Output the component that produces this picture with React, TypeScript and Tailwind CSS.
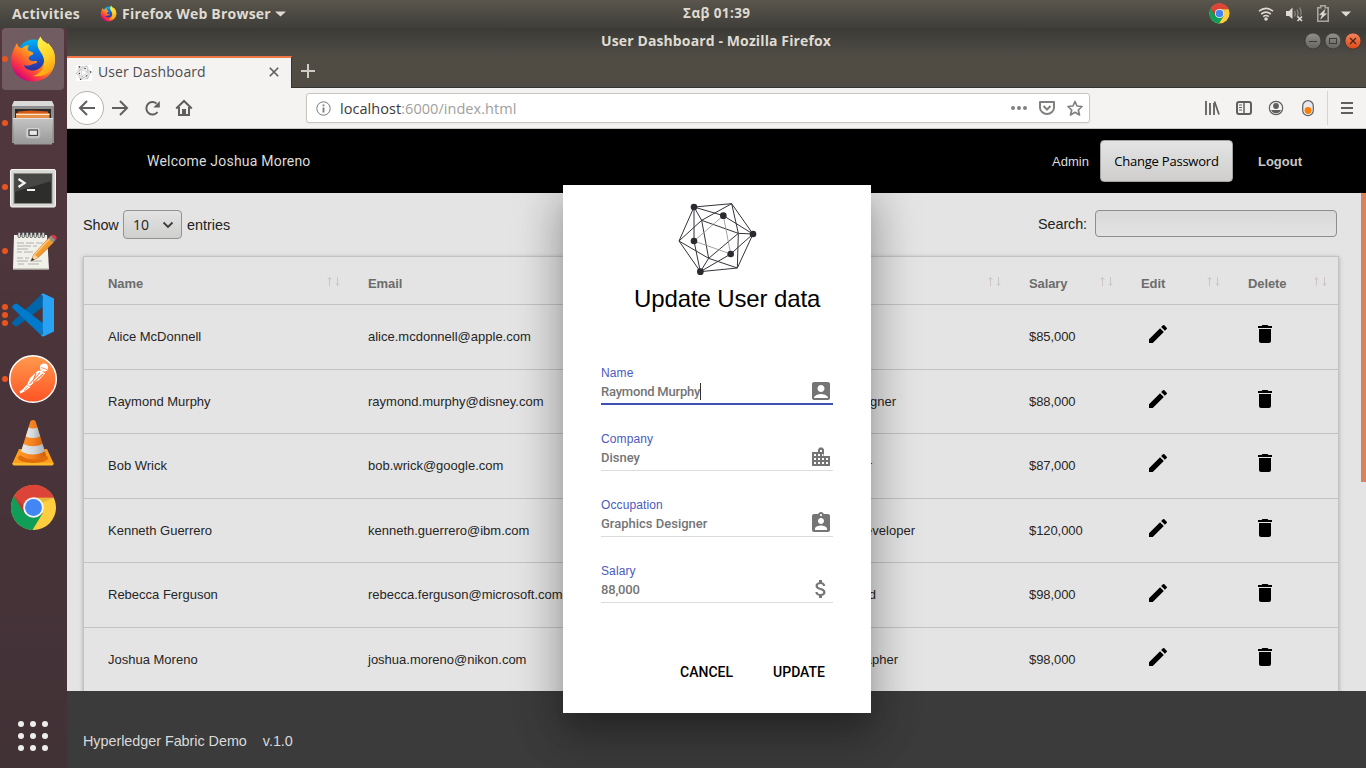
import React from "react";
import {
  MdEdit,
  MdDelete,
  MdAccountBox,
  MdAssignmentInd,
  MdAttachMoney,
} from "react-icons/md";

const UI = "font-['Open_Sans','Noto_Sans',sans-serif]";
const SANS = "font-['Liberation_Sans',Arial,sans-serif]";
const ROBOTO = "font-['Roboto',sans-serif]";

function ChromeLogo({ size }: { size: number }) {
  return (
    <svg width={size} height={size} viewBox="0 0 48 48" className="block shrink-0">
      <circle cx="24" cy="24" r="23" fill="#ffcd40" />
      <path d="M24 24 L4.1 12.5 A23 23 0 0 0 23 47 L33.5 29.5 Z" fill="#0f9d58" />
      <path d="M24 24 L14.5 29.5 L4.1 12.5 A23 23 0 0 1 45 14 L24 14 Z" fill="#db4437" />
      <path d="M24 14 H45 L34 19 Z" fill="#c9a02c" opacity=".45" />
      <path d="M4.1 12.5 L14.5 29.5 L14 22 Z" fill="#a32f25" opacity=".5" />
      <circle cx="24" cy="24" r="10.5" fill="#f4f4f4" />
      <circle cx="24" cy="24" r="8.6" fill="#4285f4" />
    </svg>
  );
}

function FirefoxLogo({ size, id }: { size: number; id: string }) {
  return (
    <svg width={size} height={size} viewBox="0 0 48 48" className="block shrink-0">
      <defs>
        <linearGradient id={id + "a"} x1="0.85" y1="0.1" x2="0.15" y2="0.9">
          <stop offset="0" stopColor="#fff44f" />
          <stop offset=".3" stopColor="#ffb01c" />
          <stop offset=".55" stopColor="#ff6a2a" />
          <stop offset=".8" stopColor="#f6294e" />
          <stop offset="1" stopColor="#c60084" />
        </linearGradient>
        <linearGradient id={id + "b"} x1="0.5" y1="0" x2="0.6" y2="1">
          <stop offset="0" stopColor="#00b3f4" />
          <stop offset=".4" stopColor="#0a6fe0" />
          <stop offset="1" stopColor="#3c1a86" />
        </linearGradient>
        <linearGradient id={id + "c"} x1="0.3" y1="0" x2="0.7" y2="1">
          <stop offset="0" stopColor="#fff44f" />
          <stop offset=".55" stopColor="#ffd326" />
          <stop offset="1" stopColor="#ff980e" />
        </linearGradient>
      </defs>
      <circle cx="25" cy="22" r="17.5" fill={"url(#" + id + "b)"} />
      <path
        d="M8 8 C6 12 2.5 17 2.3 25 C2 38 12 46.500 24 46.500 C37 46.500 46 37 46 25 C46 19 44 13 39 8 C39 16 37 20 35 22 C36.500 30 30 35.500 24 35.500 C19 35.500 15.500 33 15 30 C18 31.500 21 30.500 24 29 C27 28.500 29 27.500 27.500 26 C23 26.500 20 26 19.500 23 C20.500 20.500 24 20 24.500 18.500 C24 16.500 20 16.500 18.800 15 C18.500 12.500 19.500 11 20 10.200 C16.500 10.200 14.500 11.500 13 13.200 C10 12.800 8.500 11 8 8 Z"
        fill={"url(#" + id + "a)"}
      />
      <path
        d="M31.500 1.500 C28.500 5 27.500 10 30 14.500 C33 19.500 36 22.500 35 30 C34 36 28 40 24 41 C37 43 46 35 46 24 C46 16 43 12 39 9 C35.500 6.500 32.500 5 31.500 1.500 Z"
        fill={"url(#" + id + "c)"}
      />
    </svg>
  );
}

function FilesLogo() {
  return (
    <svg width="48" height="48" viewBox="0 0 48 48" className="mt-[2px] block">
      <defs>
        <linearGradient id="cab" x1="0" y1="0" x2="0" y2="1">
          <stop offset="0" stopColor="#c4c4c4" />
          <stop offset="1" stopColor="#989898" />
        </linearGradient>
      </defs>
      <path d="M5 1 H43 L45 5 V43 H3 V5 Z" fill="#8f8f8f" />
      <path d="M5 1 H43 L45 6 H3 Z" fill="#dadada" />
      <path d="M6 9 H42 V20 H6 Z" fill="#2c2a28" />
      <path d="M9 11.500 L22 10.500 L39 11.500 V18 H9 Z" fill="#d3581b" />
      <path d="M7 13 H40.500 V18 H7 Z" fill="#e58f49" />
      <path d="M7 14.500 H40.500" stroke="#fbe3cc" strokeWidth="1" />
      <path d="M4 18 H44 L43 44.500 H5 Z" fill="url(#cab)" />
      <path d="M4 18.500 H44" stroke="#e2e2e2" strokeWidth="1" />
      <rect x="17" y="27.500" width="14" height="10.500" rx="2" fill="#d2d2d2" stroke="#b5b5b5" />
      <rect x="20" y="30" width="8.500" height="5.500" fill="#e8e8e8" stroke="#444" strokeWidth="1.200" />
    </svg>
  );
}

function TerminalLogo() {
  return (
    <svg width="48" height="48" viewBox="0 0 48 48" className="mt-[2px] block">
      <rect x="1.500" y="5.500" width="45" height="37.500" rx="1.500" fill="#d9d9d6" stroke="#f4f4f2" />
      <rect x="4.500" y="9" width="39" height="31" fill="#8b8b89" />
      <rect x="5.500" y="10" width="37" height="29" fill="#2d2d2c" />
      <path d="M5.500 10 H42.500 V17 L5.500 28 Z" fill="#474746" />
      <path d="M9.500 15 L15.500 19 L9.500 23" stroke="#f3f3f3" strokeWidth="2.300" fill="none" />
      <path d="M18 26 H26" stroke="#f3f3f3" strokeWidth="2" />
    </svg>
  );
}

function NotesLogo() {
  return (
    <svg width="48" height="48" viewBox="0 0 48 48" className="block">
      <path d="M5 8 H38 L40 42 H4 Z" fill="#f1f1ea" />
      <path d="M4 42 H40" stroke="#bdbdb6" strokeWidth="1.500" />
      {[9, 13, 17, 21, 25, 29, 33].map((x) => (
        <rect key={x} x={x} y="5.500" width="2.400" height="5" rx="1" fill="#e9e9e9" stroke="#5b5b5b" strokeWidth="1" />
      ))}
      <path
        d="M8 16 h7 m2 0 h8 m2 0 h7 M8 19 h14 m2 0 h4 M8 22 h11 M8 25 h5 m2 0 h9 M8 31 h6 m2 0 h4 M8 34 h11 m2 0 h12 M9 37 h6 m4 0 h11"
        stroke="#b0b0ac"
        strokeWidth="1"
      />
      <path d="M22 34 L25 27 L40 11 L44.500 15.500 L29 30.500 Z" fill="#f29a2e" stroke="#c46f15" strokeWidth=".8" />
      <path d="M25.500 27.500 L41 11.500" stroke="#ffc777" strokeWidth="1.500" />
      <path d="M22 34 L25 27 L29 30.500 Z" fill="#efd3a6" />
      <path d="M22 34 L23.200 31 L25.300 32.800 Z" fill="#222" />
      <path d="M39.500 11 L42 8.500 L46.500 13 L44 15.500 Z" fill="#8e9391" />
      <path d="M42 8.500 C45 6 50 10 46.500 13.500 Z" fill="#d93a49" />
    </svg>
  );
}

function CodeLogo() {
  return (
    <svg width="48" height="48" viewBox="0 0 48 48" className="block">
      <path d="M3.400 31 L33 3 L34.500 15.500 L8.500 35 Q7 36 5.500 34.800 L3.500 33 Q2.500 32 3.400 31 Z" fill="#0065a9" />
      <path d="M3.400 17 L33 45 L34.500 32.500 L8.500 13 Q7 12 5.500 13.200 L3.500 15 Q2.500 16 3.400 17 Z" fill="#007acc" />
      <path d="M34.500 2.500 L45 7.500 V40.500 L34.500 45.500 Q32.800 45.500 32 44.500 L34 43 V5 L32 3.500 Q33 2.500 34.500 2.500 Z" fill="#27a2f4" />
      <path d="M33.700 3 H36 V45 H33.700 Z" fill="#27a2f4" />
    </svg>
  );
}

function PostmanLogo() {
  return (
    <svg width="50" height="50" viewBox="0 0 50 50" className="block">
      <defs>
        <linearGradient id="pm" x1="0" y1="0" x2="0" y2="1">
          <stop offset="0" stopColor="#ff9a4d" />
          <stop offset="1" stopColor="#ff5325" />
        </linearGradient>
      </defs>
      <circle cx="25" cy="25" r="23.300" fill="url(#pm)" stroke="#fff" strokeWidth="1.500" />
      <circle cx="36" cy="13.500" r="4" fill="#fff" />
      <path d="M33 13.500 L39 15.500" stroke="#ff8748" strokeWidth=".9" />
      <path d="M29.500 17 L33 16.500 L37 19.500 L31 26 L27 28 L22 32 L19 31 L22 24 Z" fill="#fff" />
      <path d="M32 18.500 L21.500 30 M35 20 L25 29 M28 19 L25 27" stroke="#ff7a3d" strokeWidth="1.100" />
      <path d="M18.500 31 L22.500 33 L16.500 37.500 L12.500 39.500 L11.500 37.500 L14.500 35.500 Z" fill="#fff" />
      <path d="M19.500 33 L16 37" stroke="#ff6a33" strokeWidth=".8" />
    </svg>
  );
}

function ConeLogo() {
  return (
    <svg width="48" height="50" viewBox="0 0 48 50" className="-mt-[3px] block">
      <defs>
        <linearGradient id="cone" x1="0" y1="0" x2="1" y2="0">
          <stop offset="0" stopColor="#ff9a2a" />
          <stop offset=".5" stopColor="#f58220" />
          <stop offset="1" stopColor="#c95a0b" />
        </linearGradient>
        <linearGradient id="conew" x1="0" y1="0" x2="1" y2="0">
          <stop offset="0" stopColor="#e9e9e9" />
          <stop offset=".5" stopColor="#d4d9dc" />
          <stop offset="1" stopColor="#a9b1b5" />
        </linearGradient>
      </defs>
      <path d="M10 32 H38 L44.500 46 Q45 48 43 48 H5 Q3 48 3.500 46 Z" fill="#ff9d1d" />
      <path d="M3.500 46 H44.500 V47 Q44 48.500 43 48.500 H5 Q3.500 48.500 3.500 46 Z" fill="#ffb82c" />
      <ellipse cx="24" cy="41" rx="15" ry="5" fill="#e06c0c" />
      <path d="M21.500 4 Q24 2 26.500 4 L37 38 Q24 47 11 38 Z" fill="url(#cone)" />
      <path d="M19.600 10.500 Q24 12.500 28.400 10.500 L31.200 19.500 Q24 22.500 16.800 19.500 Z" fill="url(#conew)" />
      <path d="M14.500 27 Q24 31.500 33.500 27 L36 34.500 Q24 40.500 12 34.500 Z" fill="url(#conew)" />
    </svg>
  );
}

const dock = [
  { key: "firefox", dots: 1, active: true, icon: <FirefoxLogo size={48} id="ffd" /> },
  { key: "files", dots: 1, icon: <FilesLogo /> },
  { key: "terminal", dots: 1, icon: <TerminalLogo /> },
  { key: "notes", dots: 1, icon: <NotesLogo /> },
  { key: "code", dots: 3, icon: <CodeLogo /> },
  { key: "postman", dots: 1, icon: <PostmanLogo /> },
  { key: "cone", dots: 0, icon: <ConeLogo /> },
  { key: "chrome", dots: 0, icon: <ChromeLogo size={47} /> },
];

function Dock() {
  return (
    <aside className="flex h-full w-[67px] shrink-0 flex-col bg-linear-to-b from-[#52383e] via-[#49343a] to-[#413236]">
      {dock.map((d) => (
        <div key={d.key} className="flex h-16 shrink-0 items-start pl-[2px]">
          <div
            className={
              d.active
                ? "flex h-[62px] w-[62px] items-center rounded-[4px] bg-[#715c62]"
                : "flex h-[62px] w-[62px] items-center"
            }
          >
            <div className="flex w-[6px] flex-col items-center gap-[2px]">
              {Array.from({ length: d.dots }, (_, i) => (
                <span key={i} className="h-[6px] w-[6px] rounded-full bg-[#e95420]" />
              ))}
            </div>
            <div className="flex w-[50px] shrink-0 justify-center">{d.icon}</div>
          </div>
        </div>
      ))}
      <div className="mt-auto grid h-[47px] w-full shrink-0 grid-cols-[6px_6px_6px] content-start gap-[6px] pl-[18px]">
        {Array.from({ length: 9 }, (_, i) => (
          <span key={i} className="h-[6px] w-[6px] rounded-full bg-[#eeeeec]" />
        ))}
      </div>
    </aside>
  );
}

function TopBar() {
  return (
    <header
      className={`flex h-7 shrink-0 items-center bg-linear-to-b from-[#5a564d] to-[#3f3e39] text-[14px] font-bold text-[#dfdbd2] ${UI}`}
    >
      <span className="w-[88px] pb-px pl-3 tracking-[0.3px]">Activities</span>
      <span className="flex w-[17px] items-center pb-px pl-3">
        <FirefoxLogo size={17} id="fft" />
      </span>
      <span className="w-[170px] pb-px pl-[17px] whitespace-nowrap tracking-[0.22px]">Firefox Web Browser</span>
      <svg width="11" height="6" viewBox="0 0 11 6">
        <path d="M0 .5 H11 L5.500 5.500 Z" fill="#dfdbd2" />
      </svg>
      <span className="ml-[397px] w-[90px] pb-px text-[13.500px] tracking-[0.4px]">Σαβ 01:39</span>
      <div className="ml-auto flex items-center">
        <span className="pb-[2px]">
          <ChromeLogo size={21} />
        </span>
        <svg className="-mt-px ml-[28px]" width="16" height="16" viewBox="0 0 16 16" fill="none" stroke="#dfdbd2" strokeWidth="1.600">
          <path d="M1 5.200 Q8 -.5 15 5.200 M3.200 8 Q8 4.200 12.800 8 M5.200 10.600 Q8 8.500 10.800 10.600" />
          <circle cx="8" cy="13" r="1.800" fill="#dfdbd2" stroke="none" />
        </svg>
        <svg className="-mt-px ml-[12px]" width="17" height="16" viewBox="0 0 17 16">
          <path d="M0 5 H3 L6.500 1.500 V13 L3 10 H0 Z" fill="#dfdbd2" />
          <path d="M8.500 5 Q10 7.500 8.500 10.500 M11 3.500 Q13 7.500 11 11 M13.500 1.500 Q16 6 14.500 9.500" stroke="#8a877f" strokeWidth="1.300" fill="none" />
          <path d="M11.500 10.500 L16 15 M16 10.500 L11.500 15" stroke="#dfdbd2" strokeWidth="1.700" />
        </svg>
        <svg className="-mt-[2px] ml-[14px]" width="12" height="17" viewBox="0 0 12 17">
          <path d="M3.700 2.700 V.8 H8.300 V2.700 H11.200 V16.200 H.8 V2.700 Z" fill="none" stroke="#a9a69d" strokeWidth="1.600" />
          <path d="M8 4.500 L2.500 9.700 H5.300 L3.600 14 L9.500 8.700 H6.800 Z" fill="#dfdbd2" stroke="#dfdbd2" strokeWidth=".5" />
        </svg>
        <svg className="-mt-px ml-[12px] mr-[15px]" width="10" height="6" viewBox="0 0 10 6">
          <path d="M0 .5 H10 L5 5.500 Z" fill="#dfdbd2" />
        </svg>
      </div>
    </header>
  );
}

function HyperLogo({ width, height }: { width: number; height: number }) {
  const nodes = [
    [432, 81], [609, 162], [451, 275], [520, 107], [432, 183], [542, 222],
  ];
  return (
    <svg width={width} height={height} viewBox="381 60 246 234" className="block shrink-0">
      <path
        d="M432 81 L545 71 L609 162 L562 264 L451 275 L387 183 Z M432 81 L520 107 L609 162 M432 81 L455 121 L545 71 L565 160 L609 162 M455 121 L387 183 M455 121 L565 160 M455 121 L476 235 M565 160 L562 264 M565 160 L476 235 M476 235 L387 183 M476 235 L451 275 M476 235 L562 264 M432 81 V183 L451 275 L542 222 L609 162"
        stroke="#33343a"
        strokeWidth="3"
        fill="none"
      />
      <path d="M520 107 L432 183 L542 222 Z" stroke="#909090" strokeWidth="2.500" fill="none" />
      {nodes.map(([x, y]) => (
        <circle key={x + "-" + y} cx={x} cy={y} r="10" fill="#2a2b31" />
      ))}
    </svg>
  );
}

function WindowButtons() {
  return (
    <svg width="58" height="18" viewBox="0 0 58 18" className="block">
      <defs>
        <linearGradient id="wg" x1="0" y1="0" x2="0" y2="1">
          <stop offset="0" stopColor="#92908a" />
          <stop offset="1" stopColor="#65635d" />
        </linearGradient>
        <linearGradient id="wr" x1="0" y1="0" x2="0" y2="1">
          <stop offset="0" stopColor="#f4845d" />
          <stop offset="1" stopColor="#df4a16" />
        </linearGradient>
      </defs>
      <circle cx="9" cy="9" r="8" fill="url(#wg)" stroke="#33322e" strokeWidth=".7" />
      <circle cx="29" cy="9" r="8" fill="url(#wg)" stroke="#33322e" strokeWidth=".7" />
      <circle cx="49" cy="9" r="8" fill="url(#wr)" stroke="#33322e" strokeWidth=".7" />
      <path d="M5 9.500 H13" stroke="#3b3a36" />
      <rect x="25.500" y="6.500" width="7" height="5" fill="none" stroke="#3b3a36" />
      <path d="M46 6 L52 12 M52 6 L46 12" stroke="#4a2414" strokeWidth="1.300" />
    </svg>
  );
}

function BrowserChrome() {
  return (
    <div className={`flex shrink-0 flex-col ${UI}`}>
      <div className="flex h-7 items-start bg-linear-to-b from-[#3b3a36] to-[#4f4c45]">
        <div className="w-[58px]" />
        <div className="flex-1 pl-[476px] text-[14px] font-bold leading-[26px] tracking-[0.12px] whitespace-nowrap text-[#dfdbd2]">
          User Dashboard - Mozilla Firefox
        </div>
        <div className="mt-[4px] mr-[4px]">
          <WindowButtons />
        </div>
      </div>
      <div className="flex h-8 border-b border-[#35342f] bg-[#504c44]">
        <div className="-mb-px flex h-8 w-[225px] items-center border-t-2 border-r border-t-[#f07746] border-r-[#35342f] bg-[#f4f3f2] pl-[9px]">
          <span className="bg-white">
            <HyperLogo width={16} height={16} />
          </span>
          <span className="ml-[6px] w-[171px] pb-[2px] text-[14px] leading-7 tracking-[0.1px] text-[#4d4d4d]">User Dashboard</span>
          <svg className="-mt-[2px]" width="10" height="10" viewBox="0 0 10 10">
            <path d="M.8 .8 L9.200 9.200 M9.200 .8 L.8 9.200" stroke="#5c5c5c" strokeWidth="1.600" />
          </svg>
        </div>
        <svg className="mt-[8px] ml-[9px]" width="14" height="14" viewBox="0 0 14 14">
          <path d="M7 0 V14 M0 7 H14" stroke="#cfccc5" strokeWidth="2" />
        </svg>
      </div>
      <div className="flex h-[41px] items-center border-b border-[#c9c6c2] bg-[#f4f3f2]">
        <svg width="140" height="40" viewBox="67 88 140 40" className="block shrink-0" fill="none" stroke="#5f5f5d" strokeWidth="2">
          <circle cx="87" cy="108" r="16.500" fill="#fff" stroke="#b5b3b0" strokeWidth="1" />
          <path d="M95 108 H80.500 M87 101 L80 108 L87 115" />
          <path d="M112 108 H126.500 M120 101 L127 108 L120 115" />
          <path d="M157.500 112 A6.200 6.200 0 1 1 156.500 103.500" />
          <path d="M159.800 101 V107.500 H153.300 Z" fill="#5f5f5d" stroke="none" />
          <path d="M176.200 108.500 L184 101 L191.800 108.500 M179 107 V115 H189 V107" />
          <path d="M182 109 H186 V116 H182 Z" fill="#5f5f5d" stroke="none" />
        </svg>
        <div className="ml-[99px] flex h-[30px] w-[784px] shrink-0 items-center rounded-[3px] border border-[#c8c5c1] bg-white pl-[9px] shadow-xs">
          <svg width="15" height="15" viewBox="0 0 15 15" fill="none" stroke="#7b7b7b">
            <circle cx="7.500" cy="7.500" r="6.700" />
            <path d="M7.500 3.500 V5.200 M7.500 6.500 V11.500" strokeWidth="1.800" />
          </svg>
          <span className="ml-[9px] pt-[2px] text-[14.500px] leading-[26px] tracking-[0.05px] text-[#3a3a3a]">
            localhost<span className="text-[#a09f9e]">:6000/index.html</span>
          </span>
          <svg className="ml-auto mr-[5px]" width="74" height="18" viewBox="0 0 74 18" fill="none" stroke="#82807e" strokeWidth="2">
            <g fill="#82807e" stroke="none">
              <circle cx="3" cy="9" r="2" />
              <circle cx="9" cy="9" r="2" />
              <circle cx="15" cy="9" r="2" />
            </g>
            <path d="M30 3 H44 V8.500 A7 6.500 0 0 1 30 8.500 Z" strokeLinejoin="round" />
            <path d="M33.500 7 L37 10.500 L40.500 7" />
            <path
              d="M65 2.500 L67 7 L72 7.500 L68.300 11 L69.500 16 L65 13.300 L60.500 16 L61.700 11 L58 7.500 L63 7 Z"
              strokeWidth="1.700"
              strokeLinejoin="round"
            />
          </svg>
        </div>
        <svg width="276" height="40" viewBox="1090 88 276 40" className="block shrink-0" fill="none" stroke="#5f5f5d" strokeWidth="2">
          <path d="M1206 101 V115 M1210 103 V115 M1214 103 V115" strokeWidth="1.800" />
          <path d="M1214.500 101.500 L1219 114.500" strokeWidth="1.700" />
          <rect x="1237" y="102" width="14" height="12" rx="2" />
          <path d="M1244 102 V114" strokeWidth="1.500" />
          <path d="M1239 105 H1242 M1239 107.500 H1242 M1239 110 H1242" strokeWidth="1" />
          <circle cx="1276" cy="108" r="6.700" strokeWidth="1.200" />
          <circle cx="1276" cy="106" r="2.900" fill="#5f5f5d" stroke="none" />
          <path d="M1271 110 H1281 A5.500 5.500 0 0 1 1271 110 Z" fill="#5f5f5d" stroke="none" />
          <rect x="1302.700" y="100.700" width="10.600" height="15" rx="5.300" strokeWidth="1.200" fill="#e7e9ef" />
          <circle cx="1308" cy="110.500" r="3.400" fill="#ff7d00" stroke="none" />
          <path d="M1327.500 91 V125" stroke="#d6d4d1" strokeWidth="1" />
          <path d="M1341 103 H1353 M1341 108 H1353 M1341 113 H1353" />
        </svg>
      </div>
    </div>
  );
}

const rows = [
  { name: "Alice McDonnell", email: "alice.mcdonnell@apple.com", job: "", end: 84, salary: "$85,000" },
  { name: "Raymond Murphy", email: "raymond.murphy@disney.com", job: "Graphics Designer", end: 151, salary: "$88,000" },
  { name: "Bob Wrick", email: "bob.wrick@google.com", job: "Engineer", end: 127, salary: "$87,000" },
  { name: "Kenneth Guerrero", email: "kenneth.guerrero@ibm.com", job: "Web Developer", end: 170, salary: "$120,000" },
  { name: "Rebecca Ferguson", email: "rebecca.ferguson@microsoft.com", job: "Team Lead", end: 131, salary: "$98,000" },
  { name: "Joshua Moreno", email: "joshua.moreno@nikon.com", job: "Photographer", end: 153, salary: "$98,000" },
];

const GRID = "grid grid-cols-[260px_401px_260px_112px_107px_107px]";

function HeadCell({ label }: { label: string }) {
  return (
    <div className="flex items-center pt-[6px] pl-6">
      <span className="tracking-[-0.1px]">{label}</span>
      <svg className="-mt-[3px] mr-[2px] ml-auto" width="16" height="10" viewBox="0 0 16 10" fill="none">
        <path d="M3.500 9 V0" stroke="#cfc3c3" />
        <path d="M2 2.500 L3.500 1 L5 2.500" stroke="#cfb9b9" />
        <path d="M11.500 0 V9" stroke="#c9c6c6" />
        <path d="M10 6.500 L11.500 8 L13 6.500" stroke="#c2bcbc" />
      </svg>
    </div>
  );
}

function UserTable() {
  return (
    <div className="ml-4 flex h-[500px] w-[1256px] flex-col border border-[#c2c2c2] bg-[#e4e4e4] text-[13px] text-[#262626] shadow-[0_1px_4px_rgba(0,0,0,0.25)]">
      <div className={`${GRID} h-[48px] shrink-0 border-b border-[#c2c2c2] font-bold text-[#6c6c6c]`}>
        {["Name", "Email", "", "Salary", "Edit", "Delete"].map((h) => (
          <HeadCell key={h} label={h} />
        ))}
      </div>
      {rows.map((r) => (
        <div key={r.name} className={`${GRID} h-[64.600px] shrink-0 items-center border-b border-[#c2c2c2]`}>
          <span className="pl-6">{r.name}</span>
          <span className="pl-6">{r.email}</span>
          <span className="flex">
            <span className="shrink-0 text-right whitespace-nowrap" style={{ width: r.end }}>
              {r.job}
            </span>
          </span>
          <span className="pl-6 tracking-[-0.08px]">{r.salary}</span>
          <span className="pb-[5px] pl-[29px] text-black">
            <MdEdit size={24} />
          </span>
          <span className="pb-[5px] pl-[29px] text-black">
            <MdDelete size={24} />
          </span>
        </div>
      ))}
    </div>
  );
}

function DashboardPage() {
  return (
    <div className={`flex min-h-0 flex-1 flex-col ${SANS}`}>
      <nav className="flex h-16 shrink-0 items-center bg-black pl-20 text-[13px] text-[#dcdcdc]">
        <span className={`text-[14px] tracking-[0.22px] ${ROBOTO}`}>Welcome Joshua Moreno</span>
        <span className="ml-auto pt-px">Admin</span>
        <button
          className={`ml-[11px] h-[42px] w-[133px] rounded-[4px] border border-[#a3a3a3] bg-linear-to-b from-[#e4e4e4] to-[#cfcecd] pt-[2px] text-[13px] tracking-[-0.22px] text-black ${UI}`}
        >
          Change Password
        </button>
        <span className="mr-[64px] ml-[25px] pt-px font-bold text-[#c8c8c8]">Logout</span>
      </nav>
      <main className="flex h-[498px] shrink-0 overflow-hidden bg-[#e4e4e4]">
        <div className="flex w-[1294px] shrink-0 flex-col">
          <div className="flex h-[63px] shrink-0 items-start pt-[17px] pr-6 pl-4 text-[14.400px] text-[#222]">
            <span className="flex h-[29px] items-center">
              <span className="w-[40px] pt-[2px] tracking-[-0.1px]">Show</span>
              <span className={`mr-[5px] flex h-[29px] w-[59px] items-center justify-between rounded-[4px] border border-[#939393] bg-linear-to-b from-[#e3e3e3] to-[#cfcfce] pr-[7px] pl-[9px] text-[14px] ${UI}`}>
                10
                <svg width="12" height="8" viewBox="0 0 12 8">
                  <path d="M1.500 1.500 L6 6 L10.500 1.500" stroke="#3a3a3a" strokeWidth="1.800" fill="none" />
                </svg>
              </span>
              <span className="pt-[2px]">entries</span>
            </span>
            <span className="ml-auto flex h-[27px] items-center">
              <span className="pt-[2px] tracking-[-0.1px]">Search:</span>
              <span className="ml-[8px] h-[27px] w-[242px] rounded-[4px] border border-[#8d8d8d] bg-linear-to-b from-[#d9d9d9] to-[#e2e2e2]" />
            </span>
          </div>
          <UserTable />
        </div>
        <div className="ml-auto h-[289px] w-[5px] bg-[#d9825f]" />
      </main>
      <footer className="flex flex-1 items-start gap-4 bg-[#3b3b3b] pt-[41px] pl-4 text-[14.400px] leading-[18px] tracking-[-0.04px] text-[#dadada]">
        <span>Hyperledger Fabric Demo</span>
        <span>v.1.0</span>
      </footer>
    </div>
  );
}

function CityIcon() {
  return (
    <svg width="24" height="24" viewBox="0 0 24 24" fill="#757575" className="block">
      <path
        fillRule="evenodd"
        d="M3 7 H9 V4.500 L10.500 2.500 H13.500 L15 4.500 V11 H21 V21 H3 Z M5 9 V11 H7 V9 Z M5 13 V15 H7 V13 Z M5 17 V19 H7 V17 Z M9 9 V11 H11 V9 Z M9 13 V15 H11 V13 Z M9 17 V19 H11 V17 Z M11 5 V7 H13 V5 Z M13 9 V11 H14.500 V9 Z M13 13 V15 H15 V13 Z M13 17 V19 H15 V17 Z M17 13 V15 H19 V13 Z M17 17 V19 H19 V17 Z"
      />
    </svg>
  );
}

const fields = [
  { label: "Name", value: "Raymond Murphy", icon: <MdAccountBox size={24} />, focus: true },
  { label: "Company", value: "Disney", icon: <CityIcon /> },
  { label: "Occupation", value: "Graphics Designer", icon: <MdAssignmentInd size={24} /> },
  { label: "Salary", value: "88,000", icon: <MdAttachMoney size={24} />, tight: true },
];

function UpdateDialog() {
  return (
    <div
      className={`absolute top-[185px] left-[563px] flex h-[528px] w-[308px] flex-col bg-white shadow-[0_9px_46px_8px_rgba(0,0,0,0.14),0_11px_15px_-7px_rgba(0,0,0,0.12),0_24px_38px_3px_rgba(0,0,0,0.2)] ${SANS}`}
    >
      <div className="pt-[15px] pl-[114px]">
        <HyperLogo width={82} height={78} />
      </div>
      <h4 className="mt-[5px] pl-[71px] text-[24px] leading-[32px] tracking-[-0.12px] whitespace-nowrap text-black">
        Update User data
      </h4>
      <div className="mt-[47px] flex flex-col px-[38px]">
        {fields.map((f) => (
          <div key={f.label} className="h-[66px]">
            <div className="flex flex-col">
              <label className="h-[16px] pt-[3px] text-[12px] leading-[16px] tracking-[0.1px] text-[#4a5ac0]">{f.label}</label>
              <div
                className={
                  f.focus
                    ? "flex h-[27px] items-start justify-between border-b-2 border-[#3f51b5]"
                    : "flex h-[27px] items-start justify-between border-b border-[#dcdcdc]"
                }
              >
                <span
                  className={
                    f.focus || f.tight
                      ? `flex items-center pt-[5px] text-[13px] font-medium leading-[17px] tracking-[-0.2px] text-[#757575] ${ROBOTO}`
                      : `flex items-center pt-[5px] text-[13px] font-medium leading-[17px] text-[#757575] ${ROBOTO}`
                  }
                >
                  {f.value}
                  {f.focus && <span className="h-[17px] w-px bg-[#333]" />}
                </span>
                <span className="pt-[1px] text-[#757575]">{f.icon}</span>
              </div>
            </div>
          </div>
        ))}
      </div>
      <div className={`mt-auto flex justify-end pr-[46px] pb-[33px] text-[14px] font-medium leading-[16px] text-black ${ROBOTO}`}>
        <span className="w-[93px]">CANCEL</span>
        <span>UPDATE</span>
      </div>
    </div>
  );
}

export default function App() {
  return (
    <div className="relative flex h-[768px] w-[1366px] flex-col overflow-hidden bg-[#3b3b3b]">
      <TopBar />
      <div className="flex min-h-0 flex-1">
        <Dock />
        <div className="flex w-[1299px] flex-col">
          <BrowserChrome />
          <DashboardPage />
        </div>
      </div>
      <UpdateDialog />
    </div>
  );
}
